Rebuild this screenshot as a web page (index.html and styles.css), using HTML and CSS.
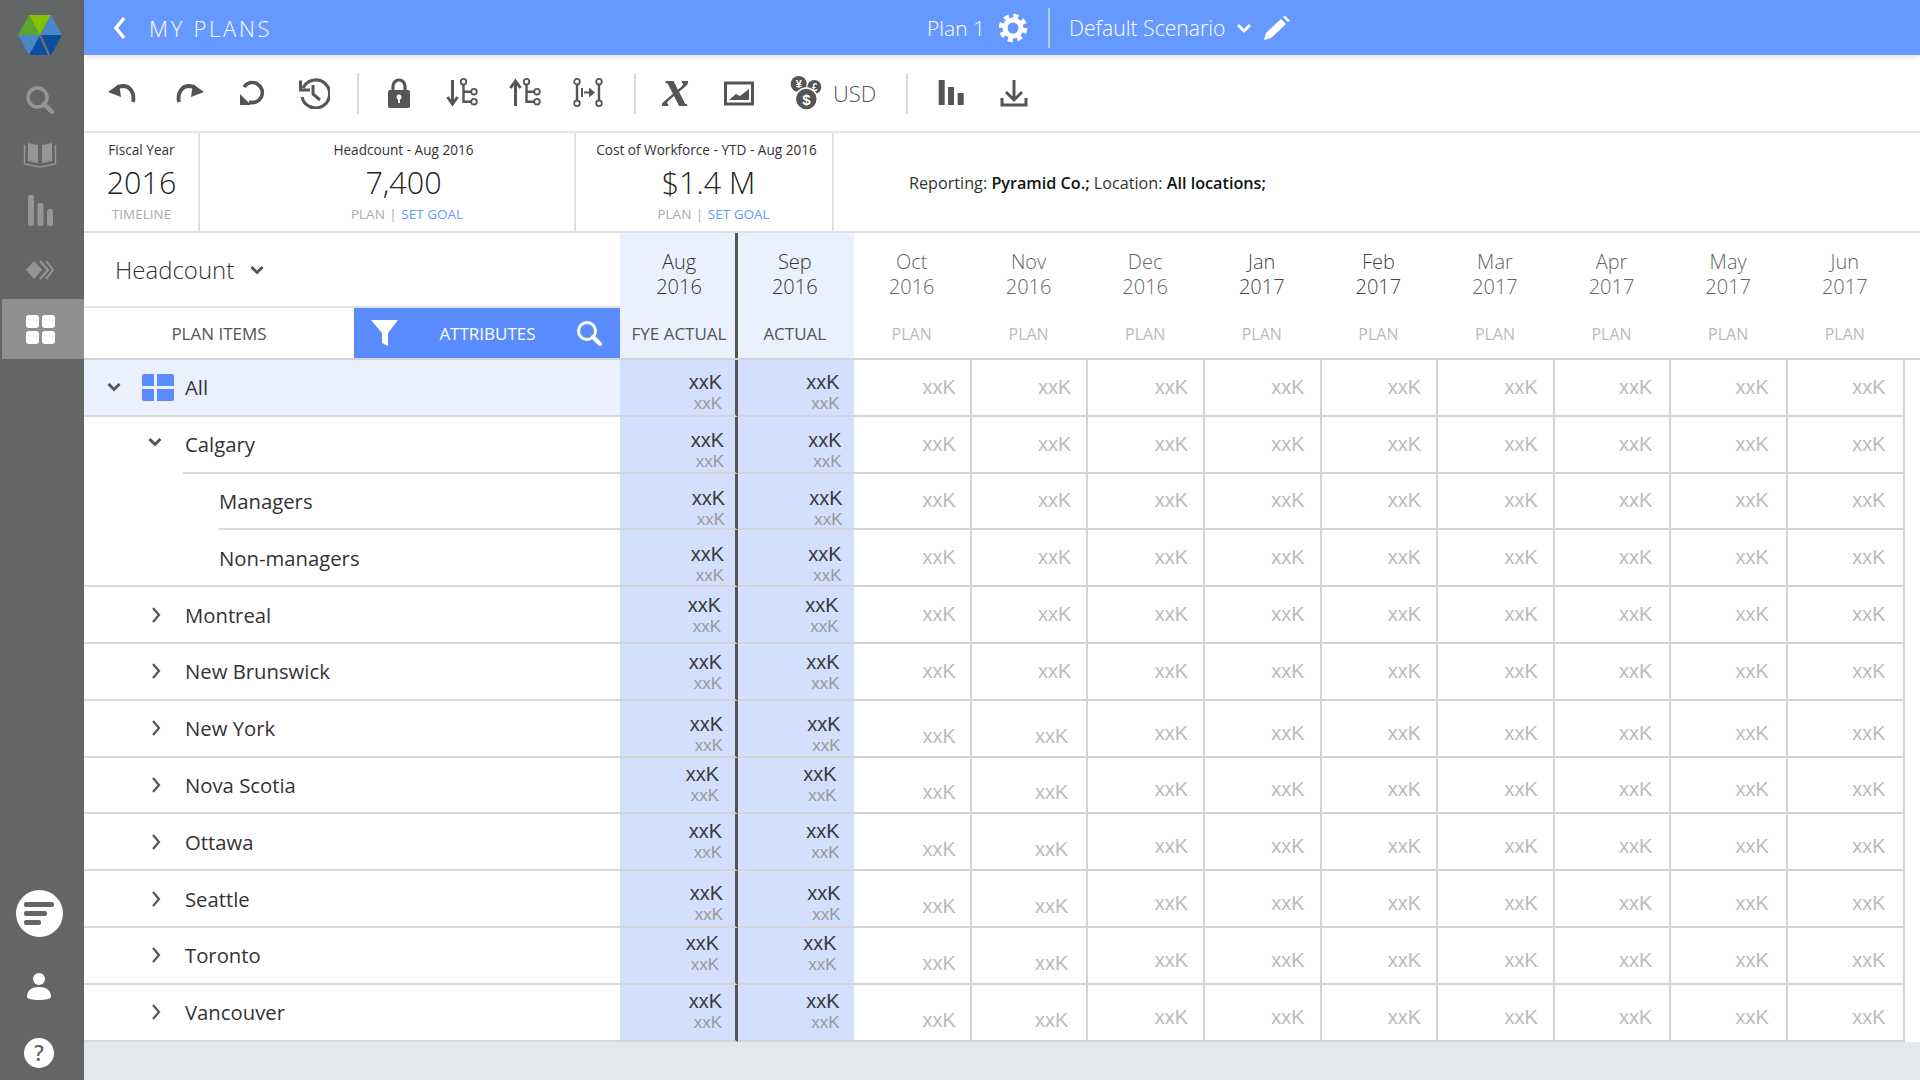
FILE: index.html
```html
<!DOCTYPE html>
<html lang="en">
<head>
    <meta charset="UTF-8">
    <meta name="viewport" content="width=device-width, initial-scale=1.0">
    <title>My Plans</title>
    <link rel="stylesheet" href="styles.css">
</head>
<body>
<svg class="sprite" width="0" height="0">
    <symbol id="chev-right" viewBox="0 0 14 18"><path d="M5 2l6 7-6 7" fill="none" stroke="#555" stroke-width="2.2"/></symbol>
    <symbol id="chev-down" viewBox="0 0 14 18"><path d="M1.5 6l5.5 5.5L12.500 6" fill="none" stroke="#555" stroke-width="3"/></symbol>
</svg>

<nav class="sidebar">
    <svg class="logo" width="44" height="40" viewBox="0 0 44 40">
        <polygon points="0,20 11,0 22,20" fill="#5aa52b"/>
        <polygon points="11,0 33,0 22,20" fill="#84c200"/>
        <polygon points="33,0 44,20 22,20" fill="#4b86c6"/>
        <polygon points="44,20 33,40 22,20" fill="#0a4ea0"/>
        <polygon points="33,40 11,40 22,20" fill="#0a4ea0"/>
        <polygon points="11,40 0,20 22,20" fill="#4b86c6"/>
        <path d="M22 20l9 20" stroke="#77736b" stroke-width="2"/>
    </svg>
    <svg class="side-icon s-search" width="30" height="28" viewBox="0 0 30 28"><circle cx="12.500" cy="11.500" r="9.500" fill="none" stroke="#949597" stroke-width="3.500"/><path d="M19 18l8 8" stroke="#949597" stroke-width="4.500" stroke-linecap="round"/></svg>
    <svg class="side-icon s-book" width="34" height="28" viewBox="0 0 34 28"><path d="M5 3l10 2v18L5 21zM29 3l-10 2v18l10-2z" fill="#949597"/><path d="M1.500 5v19l15.500 3 15.500-3V5" fill="none" stroke="#949597" stroke-width="1.500"/></svg>
    <svg class="side-icon s-bars" width="26" height="32" viewBox="0 0 26 32"><rect x="1" y="0" width="6" height="31" rx="2" fill="#949597"/><rect x="10.500" y="8" width="6" height="23" rx="2" fill="#949597"/><rect x="20" y="14" width="6" height="17" rx="2" fill="#949597"/></svg>
    <svg class="side-icon s-flow" width="28" height="20" viewBox="0 0 28 20"><path d="M8 1l8 9-8 9-8-9z" fill="#949597"/><path d="M14 1l8 9-8 9M20 1l7 9-7 9" fill="none" stroke="#949597" stroke-width="2"/></svg>
    <div class="side-active">
        <div class="tiles"><span></span><span></span><span></span><span></span></div>
    </div>
    <div class="side-bottom">
        <div class="round-chat"><span></span><span></span><span></span></div>
        <svg width="26" height="30" viewBox="0 0 26 30"><circle cx="13" cy="7" r="6" fill="#fff"/><path d="M1 25c0-7 5-10 12-10s12 3 12 10c0 4-24 4-24 0z" fill="#fff"/></svg>
        <div class="round-help">?</div>
    </div>
</nav>

<div class="main">
    <header class="topbar">
        <svg width="14" height="24" viewBox="0 0 14 24"><path d="M11 2L3 12l8 10" fill="none" stroke="#fff" stroke-width="3.500"/></svg>
        <span class="crumb">MY PLANS</span>
        <span class="plan-name">Plan 1</span>
        <svg class="gear" width="30" height="30" viewBox="0 0 30 30"><circle cx="15" cy="15" r="8" fill="none" stroke="#fff" stroke-width="5"/><circle cx="15" cy="15" r="12" fill="none" stroke="#fff" stroke-width="4.500" stroke-dasharray="5 4.420"/></svg>
        <span class="bar-divider"></span>
        <span class="scenario">Default Scenario</span>
        <svg class="scenario-chev" width="16" height="12" viewBox="0 0 16 12"><path d="M2 3l6 6 6-6" fill="none" stroke="#fff" stroke-width="3"/></svg>
        <svg class="pencil" width="28" height="26" viewBox="0 0 28 26"><path d="M1 25l2-7L18 4l5 5L8 23zM20 2l2-1.500 5 5L25 7z" fill="#fff"/></svg>
    </header>

    <div class="toolbar">
        <svg class="tool" width="32" height="32" viewBox="0 0 32 32"><path d="M27 25c2-9-3-16-10-16-3 0-5 1-7 3" fill="none" stroke="#555" stroke-width="3.800"/><path d="M2 15l11-8 2 13z" fill="#555"/></svg>
        <svg class="tool t36" width="32" height="32" viewBox="0 0 32 32"><path d="M5 25C3 16 8 9 15 9c3 0 5 1 7 3" fill="none" stroke="#555" stroke-width="3.800"/><path d="M30 15L19 7l-2 13z" fill="#555"/></svg>
        <svg class="tool t29" width="32" height="32" viewBox="0 0 32 32"><path d="M9 10a10 10 0 1 1 5 15" fill="none" stroke="#555" stroke-width="3.600"/><path d="M5 17v11h11z" fill="#555"/></svg>
        <svg class="tool" width="32" height="32" viewBox="0 0 32 32"><path d="M5 11a14 14 0 1 1-1 9" fill="none" stroke="#555" stroke-width="3.200"/><path d="M2.500 3.500v9.500h9.500" fill="none" stroke="#555" stroke-width="3"/><path d="M15 8v9l7 6" fill="none" stroke="#555" stroke-width="3"/></svg>
        <span class="tool-divider d27"></span>
        <svg class="tool t24" width="32" height="32" viewBox="0 0 32 32"><path d="M10 14V9a6 6 0 0 1 12 0v5" fill="none" stroke="#555" stroke-width="3.200"/><rect x="5" y="13" width="22" height="18" rx="2" fill="#555"/><circle cx="16" cy="20" r="2.500" fill="#fff"/><rect x="15" y="20" width="2" height="6" fill="#fff"/></svg>
        <svg class="tool" width="32" height="32" viewBox="0 0 32 32"><path d="M6.500 3v23M1.500 20l5 7 5-7" fill="none" stroke="#555" stroke-width="3"/><path d="M17.500 7.500v17.200H25M17.500 14.700H25" fill="none" stroke="#555" stroke-width="2.400"/><g fill="#fff" stroke="#555" stroke-width="1.800"><circle cx="17.500" cy="4.700" r="2.800"/><circle cx="28" cy="14.700" r="2.800"/><circle cx="28" cy="24.700" r="2.800"/></g></svg>
        <svg class="tool" width="32" height="32" viewBox="0 0 32 32"><path d="M6.500 29V6M1.500 11l5-7 5 7" fill="none" stroke="#555" stroke-width="3"/><path d="M17.500 7.500v17.200H25M17.500 14.700H25" fill="none" stroke="#555" stroke-width="2.400"/><g fill="#fff" stroke="#555" stroke-width="1.800"><circle cx="17.500" cy="4.700" r="2.800"/><circle cx="28" cy="14.700" r="2.800"/><circle cx="28" cy="24.700" r="2.800"/></g></svg>
        <svg class="tool" width="32" height="32" viewBox="0 0 32 32"><path d="M5 7v17M27 7v17" stroke="#555" stroke-width="2.400"/><g fill="#fff" stroke="#555" stroke-width="1.800"><circle cx="5" cy="4.700" r="2.800"/><circle cx="5" cy="26.300" r="2.800"/><circle cx="27" cy="4.700" r="2.800"/><circle cx="27" cy="26.300" r="2.800"/></g><path d="M10 11v9M12 15.500h8" fill="none" stroke="#555" stroke-width="2"/><path d="M17 10.500l6 5-6 5z" fill="#555"/></svg>
        <span class="tool-divider d30"></span>
        <span class="tool t24 formula">x</span>
        <svg class="tool" width="32" height="32" viewBox="0 0 32 32"><rect x="2.500" y="6" width="27" height="21" fill="none" stroke="#555" stroke-width="3"/><path d="M6 23l7-6 4 2 9-7v11z" fill="#555"/></svg>
        <svg class="tool t35" width="32" height="36" viewBox="0 0 32 36">
            <g font-family="Liberation Sans, sans-serif" font-weight="700" text-anchor="middle" fill="#fff">
                <circle cx="8.700" cy="9" r="8" fill="#555"/><text x="8.700" y="13" font-size="11">¥</text>
                <circle cx="24.300" cy="12" r="7" fill="#555"/><text x="24.800" y="15.500" font-size="10">£</text>
                <circle cx="16.300" cy="24" r="11" fill="#555" stroke="#fff" stroke-width="1.500"/><text x="16.300" y="29.500" font-size="15">$</text>
            </g>
        </svg>
        <span class="currency">USD</span>
        <span class="tool-divider d30"></span>
        <svg class="tool t27" width="32" height="32" viewBox="0 0 32 32"><path d="M3.700 3h6v25h-6zM13 10h6v18h-6zM22.700 16h6v12h-6z" fill="#555"/></svg>
        <svg class="tool" width="32" height="32" viewBox="0 0 32 32"><path d="M16 3v20M8 15l8 8 8-8" fill="none" stroke="#555" stroke-width="3"/><path d="M4 21v7h24v-7" fill="none" stroke="#555" stroke-width="3"/></svg>
    </div>

    <div class="kpis">
        <div class="kpi kpi-year">
            <div class="kpi-title">Fiscal Year</div>
            <div class="kpi-value">2016</div>
            <div class="kpi-sub">TIMELINE</div>
        </div>
        <div class="kpi kpi-heads">
            <div class="kpi-title">Headcount - Aug 2016</div>
            <div class="kpi-value">7,400</div>
            <div class="kpi-sub">PLAN <i>|</i> <a>SET GOAL</a></div>
        </div>
        <div class="kpi kpi-cost">
            <div class="kpi-title">Cost of Workforce - YTD - Aug 2016</div>
            <div class="kpi-value">$1.4 M</div>
            <div class="kpi-sub">PLAN <i>|</i> <a>SET GOAL</a></div>
        </div>
        <div class="filters">Reporting: <b>Pyramid Co.;</b> Location: <b>All locations;</b></div>
    </div>

    <div class="table-head">
        <div class="head-left">
            <div class="measure">Headcount <svg width="16" height="18"><use href="#chev-down"/></svg></div>
            <div class="tabs">
                <div class="tab">PLAN ITEMS</div>
                <div class="tab tab-on">
                    <svg width="28" height="27" viewBox="0 0 28 27"><path d="M0 0h27L17 13v13l-6-3V13z" fill="#fff"/></svg>
                    <span>ATTRIBUTES</span>
                    <svg width="26" height="26" viewBox="0 0 26 26"><circle cx="11" cy="11" r="8.500" fill="none" stroke="#fff" stroke-width="3"/><path d="M17 17l7 7" stroke="#fff" stroke-width="4" stroke-linecap="round"/></svg>
                </div>
            </div>
        </div>
        <div class="col-head aug"><div class="month">Aug<br>2016</div><div class="status">FYE ACTUAL</div></div>
        <div class="col-head sep"><div class="month">Sep<br>2016</div><div class="status">ACTUAL</div></div>
        <div class="col-head plan-col oct"><div class="month">Oct<br>2016</div><div class="status">PLAN</div></div>
        <div class="col-head plan-col"><div class="month">Nov<br>2016</div><div class="status">PLAN</div></div>
        <div class="col-head plan-col"><div class="month">Dec<br>2016</div><div class="status">PLAN</div></div>
        <div class="col-head plan-col dark"><div class="month">Jan<br>2017</div><div class="status">PLAN</div></div>
        <div class="col-head plan-col dark"><div class="month">Feb<br>2017</div><div class="status">PLAN</div></div>
        <div class="col-head plan-col"><div class="month">Mar<br>2017</div><div class="status">PLAN</div></div>
        <div class="col-head plan-col"><div class="month">Apr<br>2017</div><div class="status">PLAN</div></div>
        <div class="col-head plan-col"><div class="month">May<br>2017</div><div class="status">PLAN</div></div>
        <div class="col-head plan-col"><div class="month">Jun<br>2017</div><div class="status">PLAN</div></div>
    </div>

    <div class="rows">
        <div class="row r-all">
            <div class="label label-all"><svg class="chev-all" width="14" height="18"><use href="#chev-down"/></svg>
                <svg class="grid-icon" width="32" height="27" viewBox="0 0 32 27"><path d="M2 0h10v12H0V2a2 2 0 0 1 2-2zM15 0h15a2 2 0 0 1 2 2v10H15zM0 15h12v12H2a2 2 0 0 1-2-2zM15 15h17v10a2 2 0 0 1-2 2H15z" fill="#5b8cff"/></svg>
                <span class="name">All</span></div>
            <div class="cell act aug"><b>xxK</b><small>xxK</small></div><div class="cell act sep"><b>xxK</b><small>xxK</small></div>
            <div class="cell plan oct">xxK</div><div class="cell plan nov">xxK</div><div class="cell plan">xxK</div><div class="cell plan">xxK</div><div class="cell plan">xxK</div><div class="cell plan">xxK</div><div class="cell plan">xxK</div><div class="cell plan">xxK</div><div class="cell plan">xxK</div>
        </div>
        <div class="row r-calgary">
            <div class="label inset"><div class="slot"><svg class="chev-raised" width="14" height="18"><use href="#chev-down"/></svg></div><span class="name">Calgary</span></div>
            <div class="cell act aug"><b>xxK</b><small>xxK</small></div><div class="cell act sep"><b>xxK</b><small>xxK</small></div>
            <div class="cell plan oct">xxK</div><div class="cell plan nov">xxK</div><div class="cell plan">xxK</div><div class="cell plan">xxK</div><div class="cell plan">xxK</div><div class="cell plan">xxK</div><div class="cell plan">xxK</div><div class="cell plan">xxK</div><div class="cell plan">xxK</div>
        </div>
        <div class="row r-managers">
            <div class="label inset deep"><div class="slot"></div><span class="name">Managers</span></div>
            <div class="cell act aug"><b>xxK</b><small>xxK</small></div><div class="cell act sep"><b>xxK</b><small>xxK</small></div>
            <div class="cell plan oct">xxK</div><div class="cell plan nov">xxK</div><div class="cell plan">xxK</div><div class="cell plan">xxK</div><div class="cell plan">xxK</div><div class="cell plan">xxK</div><div class="cell plan">xxK</div><div class="cell plan">xxK</div><div class="cell plan">xxK</div>
        </div>
        <div class="row r-nonmanagers">
            <div class="label deep"><div class="slot"></div><span class="name">Non-managers</span></div>
            <div class="cell act aug"><b>xxK</b><small>xxK</small></div><div class="cell act sep"><b>xxK</b><small>xxK</small></div>
            <div class="cell plan oct">xxK</div><div class="cell plan nov">xxK</div><div class="cell plan">xxK</div><div class="cell plan">xxK</div><div class="cell plan">xxK</div><div class="cell plan">xxK</div><div class="cell plan">xxK</div><div class="cell plan">xxK</div><div class="cell plan">xxK</div>
        </div>
        <div class="row r-montreal">
            <div class="label"><div class="slot"><svg width="14" height="18"><use href="#chev-right"/></svg></div><span class="name">Montreal</span></div>
            <div class="cell act aug"><b>xxK</b><small>xxK</small></div><div class="cell act sep"><b>xxK</b><small>xxK</small></div>
            <div class="cell plan oct">xxK</div><div class="cell plan nov">xxK</div><div class="cell plan">xxK</div><div class="cell plan">xxK</div><div class="cell plan">xxK</div><div class="cell plan">xxK</div><div class="cell plan">xxK</div><div class="cell plan">xxK</div><div class="cell plan">xxK</div>
        </div>
        <div class="row r-brunswick">
            <div class="label"><div class="slot"><svg width="14" height="18"><use href="#chev-right"/></svg></div><span class="name">New Brunswick</span></div>
            <div class="cell act aug"><b>xxK</b><small>xxK</small></div><div class="cell act sep"><b>xxK</b><small>xxK</small></div>
            <div class="cell plan oct">xxK</div><div class="cell plan nov">xxK</div><div class="cell plan">xxK</div><div class="cell plan">xxK</div><div class="cell plan">xxK</div><div class="cell plan">xxK</div><div class="cell plan">xxK</div><div class="cell plan">xxK</div><div class="cell plan">xxK</div>
        </div>
        <div class="row low r-newyork">
            <div class="label"><div class="slot"><svg width="14" height="18"><use href="#chev-right"/></svg></div><span class="name">New York</span></div>
            <div class="cell act aug"><b>xxK</b><small>xxK</small></div><div class="cell act sep"><b>xxK</b><small>xxK</small></div>
            <div class="cell plan oct">xxK</div><div class="cell plan nov">xxK</div><div class="cell plan">xxK</div><div class="cell plan">xxK</div><div class="cell plan">xxK</div><div class="cell plan">xxK</div><div class="cell plan">xxK</div><div class="cell plan">xxK</div><div class="cell plan">xxK</div>
        </div>
        <div class="row low r-scotia">
            <div class="label"><div class="slot"><svg width="14" height="18"><use href="#chev-right"/></svg></div><span class="name">Nova Scotia</span></div>
            <div class="cell act aug"><b>xxK</b><small>xxK</small></div><div class="cell act sep"><b>xxK</b><small>xxK</small></div>
            <div class="cell plan oct">xxK</div><div class="cell plan nov">xxK</div><div class="cell plan">xxK</div><div class="cell plan">xxK</div><div class="cell plan">xxK</div><div class="cell plan">xxK</div><div class="cell plan">xxK</div><div class="cell plan">xxK</div><div class="cell plan">xxK</div>
        </div>
        <div class="row low r-ottawa">
            <div class="label"><div class="slot"><svg width="14" height="18"><use href="#chev-right"/></svg></div><span class="name">Ottawa</span></div>
            <div class="cell act aug"><b>xxK</b><small>xxK</small></div><div class="cell act sep"><b>xxK</b><small>xxK</small></div>
            <div class="cell plan oct">xxK</div><div class="cell plan nov">xxK</div><div class="cell plan">xxK</div><div class="cell plan">xxK</div><div class="cell plan">xxK</div><div class="cell plan">xxK</div><div class="cell plan">xxK</div><div class="cell plan">xxK</div><div class="cell plan">xxK</div>
        </div>
        <div class="row low r-seattle">
            <div class="label"><div class="slot"><svg width="14" height="18"><use href="#chev-right"/></svg></div><span class="name">Seattle</span></div>
            <div class="cell act aug"><b>xxK</b><small>xxK</small></div><div class="cell act sep"><b>xxK</b><small>xxK</small></div>
            <div class="cell plan oct">xxK</div><div class="cell plan nov">xxK</div><div class="cell plan">xxK</div><div class="cell plan">xxK</div><div class="cell plan">xxK</div><div class="cell plan">xxK</div><div class="cell plan">xxK</div><div class="cell plan">xxK</div><div class="cell plan">xxK</div>
        </div>
        <div class="row low r-toronto">
            <div class="label"><div class="slot"><svg width="14" height="18"><use href="#chev-right"/></svg></div><span class="name">Toronto</span></div>
            <div class="cell act aug"><b>xxK</b><small>xxK</small></div><div class="cell act sep"><b>xxK</b><small>xxK</small></div>
            <div class="cell plan oct">xxK</div><div class="cell plan nov">xxK</div><div class="cell plan">xxK</div><div class="cell plan">xxK</div><div class="cell plan">xxK</div><div class="cell plan">xxK</div><div class="cell plan">xxK</div><div class="cell plan">xxK</div><div class="cell plan">xxK</div>
        </div>
        <div class="row low r-vancouver">
            <div class="label"><div class="slot"><svg width="14" height="18"><use href="#chev-right"/></svg></div><span class="name">Vancouver</span></div>
            <div class="cell act aug"><b>xxK</b><small>xxK</small></div><div class="cell act sep"><b>xxK</b><small>xxK</small></div>
            <div class="cell plan oct">xxK</div><div class="cell plan nov">xxK</div><div class="cell plan">xxK</div><div class="cell plan">xxK</div><div class="cell plan">xxK</div><div class="cell plan">xxK</div><div class="cell plan">xxK</div><div class="cell plan">xxK</div><div class="cell plan">xxK</div>
        </div>
    </div>
</div>
</body>
</html>
```

FILE: styles.css
```css
* { box-sizing: border-box; }
html, body { margin: 0; height: 100%; overflow: hidden; }
body { display: flex; font-family: "Open Sans", "Liberation Sans", sans-serif; color: #333; background: #e4e7ec; }
.sprite { position: absolute; }

/* sidebar */
.sidebar { width: 84px; height: 1080px; flex: none; background: #646567; display: flex; flex-direction: column; align-items: center; padding: 15px 4px 0 0; }
.logo { margin-left: -1px; flex: none; }
.s-search { margin-top: 31px; }
.s-book { margin-top: 26px; }
.s-bars { margin-top: 27px; }
.s-flow { margin-top: 33px; }
.side-active { width: 82px; height: 60px; margin-top: 19px; align-self: flex-start; margin-left: 2px; background: #8f8f90; display: flex; align-items: center; justify-content: center; }
.tiles { display: grid; grid-template-columns: 13px 13px; gap: 3px; margin-left: -6px; }
.tiles span { height: 13px; background: #fff; border-radius: 3px; }
.side-bottom { margin-top: auto; margin-right: 2px; display: flex; flex-direction: column; align-items: center; padding-bottom: 12px; }
.round-chat { width: 47px; height: 47px; border-radius: 50%; background: #fff; display: flex; flex-direction: column; justify-content: center; padding-left: 8px; gap: 4px; }
.round-chat span { display: block; height: 5px; width: 30px; background: #646567; border-radius: 2px; }
.round-chat span:nth-child(2) { width: 23px; }
.round-chat span:nth-child(3) { width: 17px; }
.side-bottom > svg { margin-top: 35px; }
.round-help { width: 30px; height: 30px; margin-top: 36px; border-radius: 50%; background: #fff; color: #646567; font-size: 21px; font-weight: 600; line-height: 30px; text-align: center; }

.main { flex: 1; min-width: 0; height: 1080px; display: flex; flex-direction: column; }

/* blue bar */
.topbar { height: 55px; flex: none; background: #6699ff; color: #fff; display: flex; align-items: center; padding-left: 29px; box-shadow: 0 2px 6px rgba(0, 0, 0, .12); position: relative; }
.crumb { margin-left: 22px; width: 240px; font-size: 22px; font-weight: 300; letter-spacing: 2.7px; }
.plan-name { margin-left: 538px; font-size: 21px; font-weight: 300; }
.gear { margin-left: 13px; }
.bar-divider { width: 2px; height: 40px; margin-left: 20px; background: rgba(255, 255, 255, .5); }
.scenario { margin-left: 19px; font-size: 21.200px; font-weight: 300; }
.scenario-chev { margin-left: 10px; }
.pencil { margin-left: 11px; }

/* toolbar */
.toolbar { height: 78px; flex: none; background: #fff; display: flex; align-items: center; padding-left: 22px; border-bottom: 2px solid #e6e6e6; }
.tool { flex: none; margin-left: 31px; }
.tool:first-child { margin-left: 0; }
.t36 { margin-left: 36px; }
.t29 { margin-left: 29px; }
.t24 { margin-left: 24px; }
.t35 { margin-left: 35px; }
.t27 { margin-left: 27px; }
.tool-divider { width: 2px; height: 41px; background: #d9d9d9; flex: none; }
.d27 { margin-left: 27px; }
.d30 { margin-left: 30px; }
.formula { width: 32px; font: italic 700 54px/32px "Liberation Serif", serif; color: #555; text-align: center; padding-bottom: 10px; }
.currency { margin-left: 11px; width: 43px; font-size: 22px; font-weight: 300; color: #555; }

/* kpi strip */
.kpis { height: 100px; flex: none; background: #fff; display: flex; border-bottom: 2px solid #e0e0e0; }
.kpi { border-right: 2px solid #e0e0e0; text-align: center; padding-top: 6px; }
.kpi-year { width: 116px; padding-left: 1px; }
.kpi-heads { width: 376px; padding-left: 33px; }
.kpi-cost { width: 258px; padding-left: 5px; }
.kpi-title { font-size: 13.600px; line-height: 21px; color: #333; }
.kpi-value { font-size: 30.500px; font-weight: 300; line-height: 42px; margin-top: 1px; color: #222; }
.kpi-sub { font-size: 13.500px; line-height: 20px; margin-top: 1px; color: #aaa; }
.kpi-sub i { font-style: normal; margin: 0 1px; }
.kpi-sub a { color: #6699ff; }
.kpi-heads .kpi-sub { padding-left: 7px; }
.kpi-cost .kpi-sub { padding-left: 14px; }
.kpi-cost .kpi-value { padding-left: 4px; }
.filters { align-self: center; margin-left: 75px; padding-top: 1px; font-size: 16.200px; color: #333; }
.filters b { font-weight: 600; color: #111; }

/* table head */
.table-head { height: 127px; flex: none; display: flex; background: #fff; border-bottom: 2px solid #d4d4d4; }
.head-left { width: 536px; flex: none; display: flex; flex-direction: column; }
.measure { height: 75px; padding-left: 31px; display: flex; align-items: center; gap: 15px; font-size: 24px; font-weight: 300; border-bottom: 2px solid #e4e4e4; }
.tabs { flex: 1; display: flex; }
.tab { width: 270px; display: flex; align-items: center; justify-content: center; font-size: 17px; color: #555; }
.tab-on { width: 266px; background: #5b8cff; color: #fff; justify-content: space-between; padding: 0 18px 0 17px; }
.col-head { flex: none; display: flex; flex-direction: column; align-items: center; color: #666; }
.col-head.aug { width: 118px; background: #eaf0fe; color: #333; border-right: 3px solid #555; padding-left: 3px; }
.col-head.sep { width: 115.6px; background: #eaf0fe; color: #333; padding-right: 2px; }
.plan-col { width: 116.6px; padding-right: 3px; }
.plan-col.oct { width: 118.2px; padding-right: 2px; }
.plan-col.dark { color: #444; }
.month { font-size: 20px; font-weight: 300; line-height: 25px; text-align: center; margin-top: 16px; height: 68px; }
.status { font-size: 16px; color: #bbb; line-height: 22px; margin-top: 6px; }
.aug .status, .sep .status { color: #555; font-size: 17px; }

/* rows */
.rows { flex: none; background: #fff; }
.row { height: 56.8px; display: flex; }
.label { width: 536px; flex: none; display: flex; align-items: center; border-bottom: 2px solid #d9d9d9; font-size: 20.300px; background: #fff; }
.slot { width: 99px; height: 100%; flex: none; display: flex; align-items: center; justify-content: flex-end; padding-right: 21px; }
.deep .slot { width: 135px; }
.name { padding-left: 2px; }
.deep .name { padding-left: 0; }
.label.inset { border-bottom: none; }
.inset .name { flex: 1; height: 100%; display: flex; align-items: center; border-bottom: 2px solid #d9d9d9; }
.chev-raised { margin-bottom: 6px; }
.label-all { background: #eaf0fe; padding-left: 23px; }
.chev-all { margin-right: 21px; }
.label-all .name { padding-left: 11px; }

.cell { flex: none; border-bottom: 2px solid #d4d4d4; display: flex; }
.act { flex-direction: column; align-items: flex-end; justify-content: center; background: #d2e0fd; color: #3a3a3a; font-size: 20px; line-height: 22px;
    padding-top: calc(10px + var(--drop, 0px)); padding-bottom: var(--lift, 0); padding-right: calc(14px - var(--shift, 0px)); }
.act b { font-weight: 400; font-family: "Liberation Sans", sans-serif; }
.act small { font-family: "Liberation Sans", sans-serif; font-size: 17px; line-height: 21px; color: #999; }
.act.aug { width: 118px; border-right: 3px solid #555; padding-right: calc(13px - var(--shift, 0px)); }
.act.sep { width: 115.6px; }
.plan { width: 116.6px; border-right: 2px solid #d4d4d4; align-items: center; justify-content: flex-end; padding-right: 15px; font-family: "Liberation Sans", sans-serif; font-size: 20px; color: #bbb; }
.plan.oct { width: 118.2px; padding-right: 14px; }
.plan:nth-last-child(-n+3) { padding-right: 17px; }
.low .plan { padding-top: 10px; }
.low .plan.oct, .low .plan.nov { padding-top: 16px; }
.low .plan.nov { padding-right: 18px; }

/* values in the source drift a little from row to row */
.r-calgary { --shift: 2px; --drop: 2px; }
.r-managers { --shift: 3px; --drop: 4px; }
.r-nonmanagers { --shift: 2px; --drop: 4px; }
.r-montreal { --shift: -1px; --lift: 8px; }
.r-brunswick { --lift: 8px; }
.r-newyork { --shift: 1px; --drop: 2px; }
.r-scotia { --shift: -3px; --lift: 10px; }
.r-ottawa { --lift: 10px; }
.r-seattle { --shift: 1px; }
.r-toronto { --shift: -3px; --lift: 14px; }
.r-vancouver { --lift: 12px; }
```
